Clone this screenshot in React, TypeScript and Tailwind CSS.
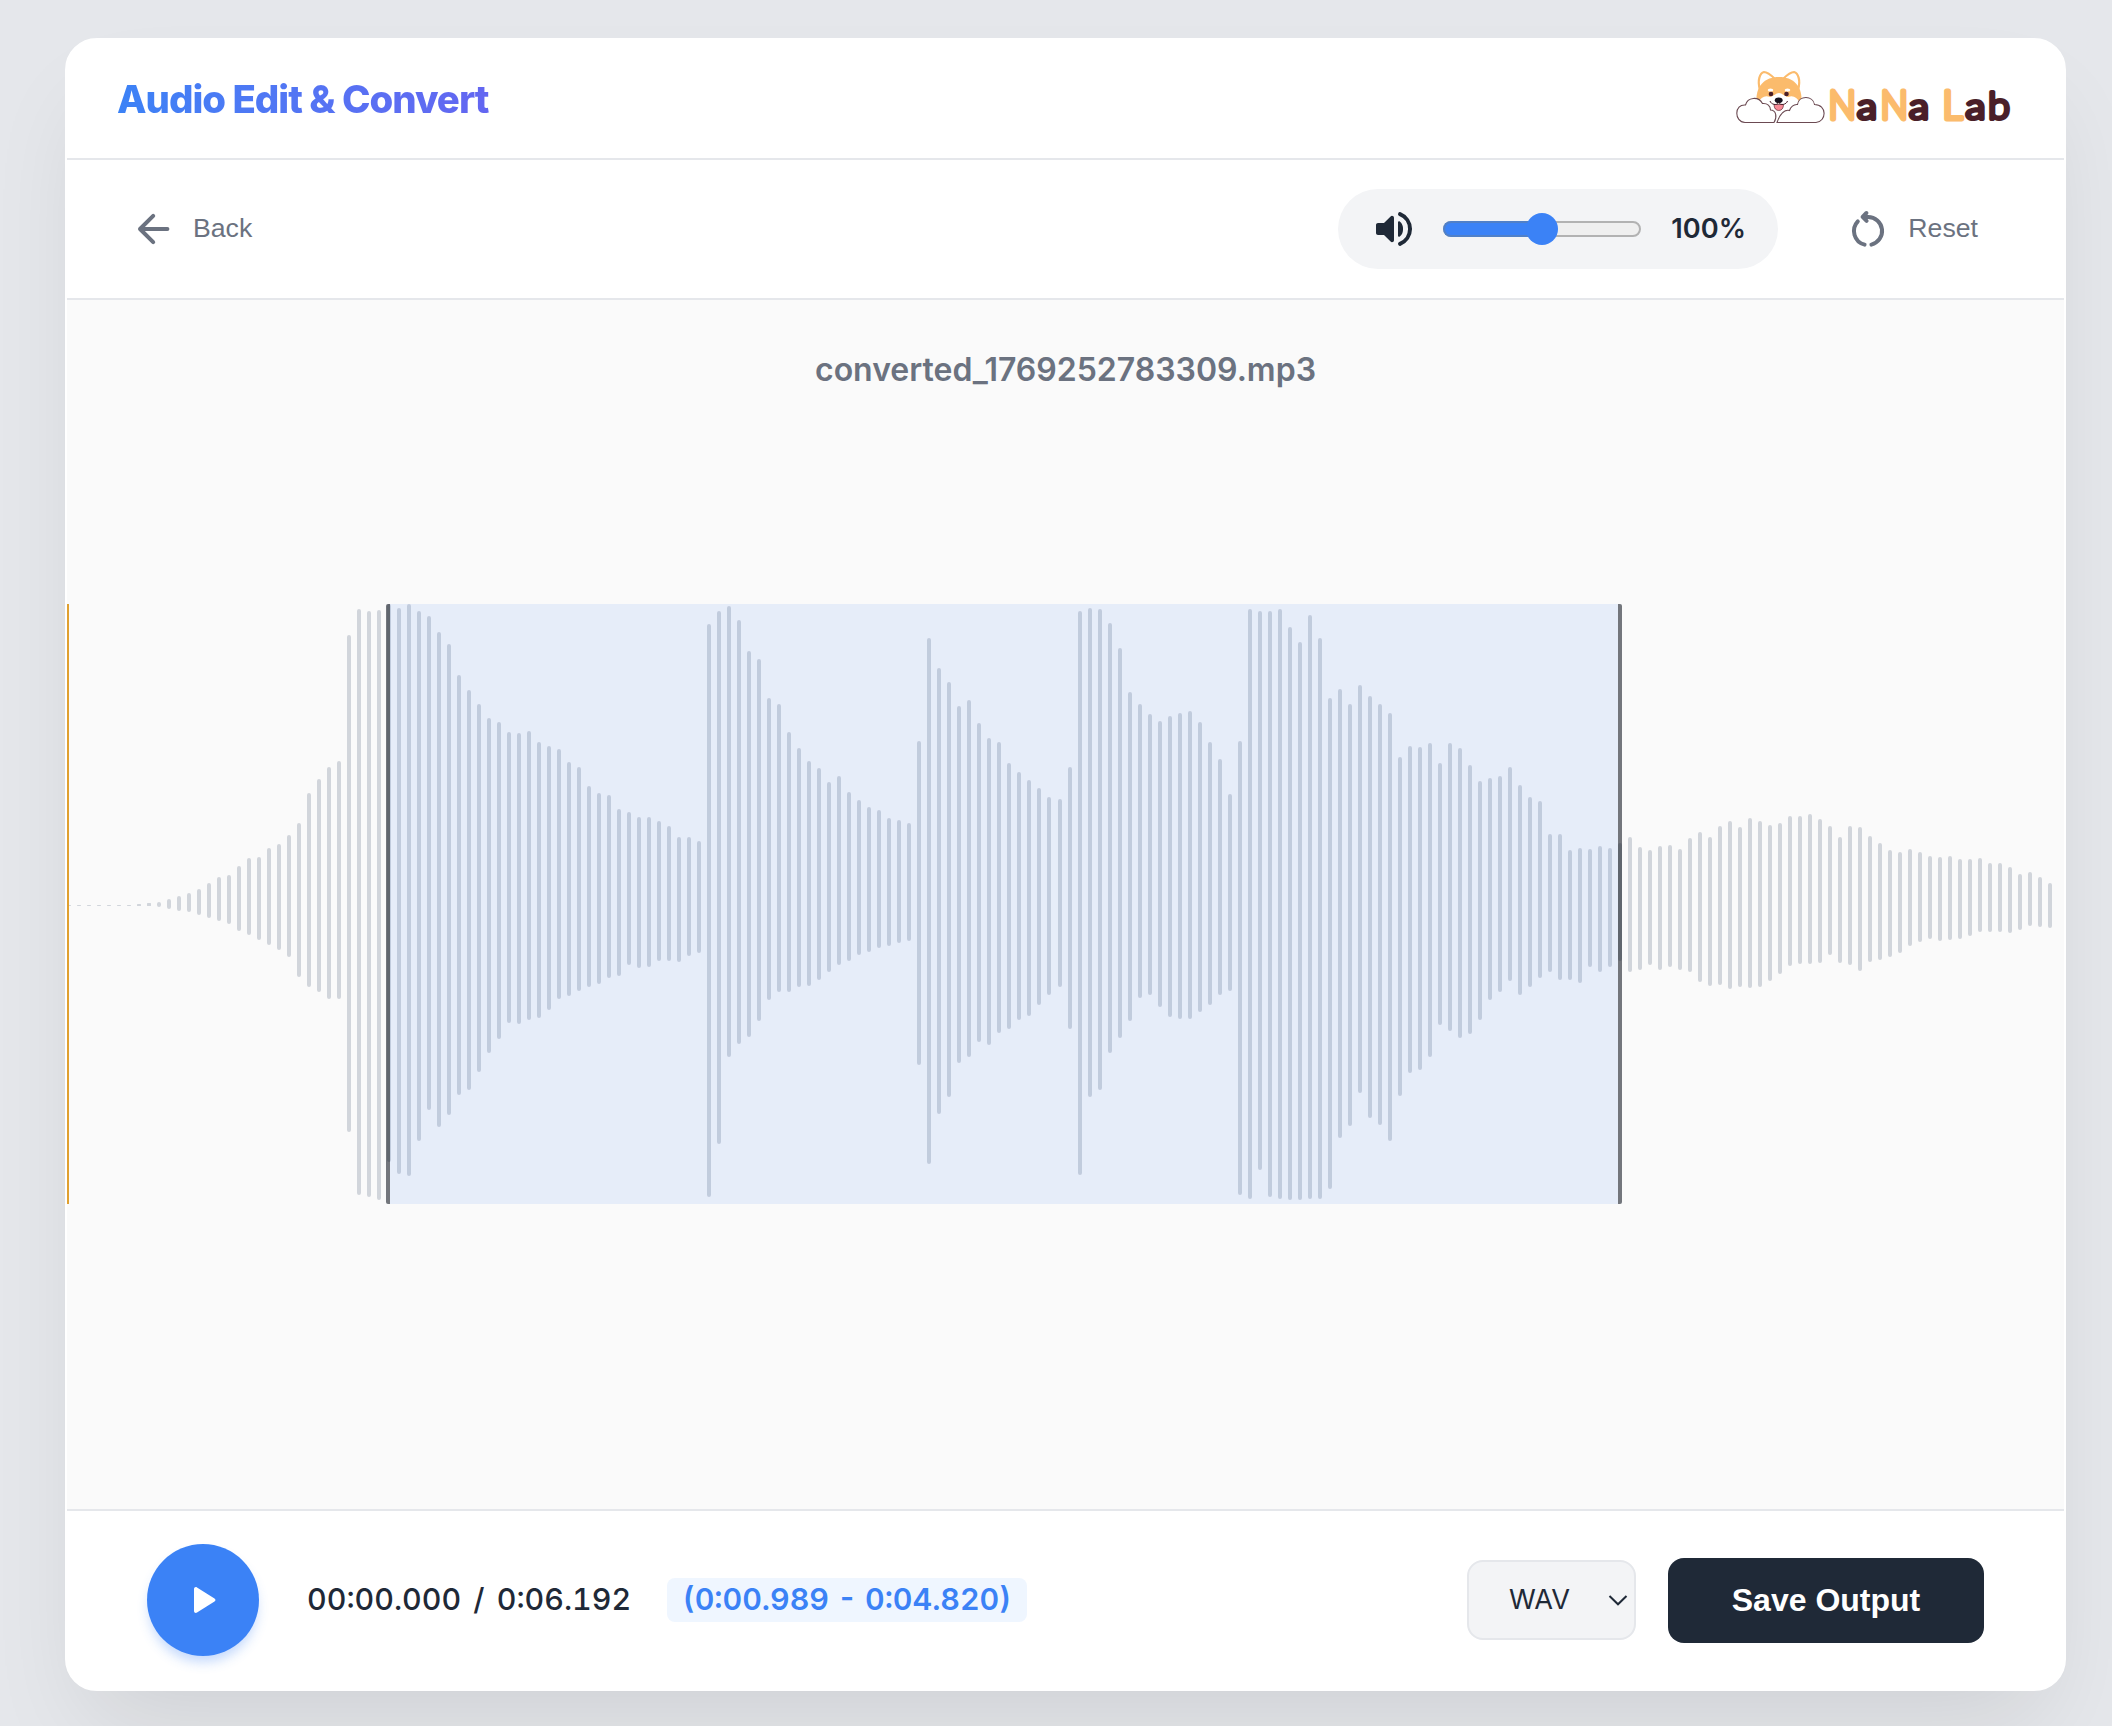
import React from "react";

const sans = "font-['Inter',sans-serif]";
const arial = "font-['Liberation_Sans',Arial,sans-serif]";

const WAVE_WIDTH = 1998;
const WAVE_HEIGHT = 600;
const DURATION = 6.192;
const region = { start: 0.989, end: 4.82 };

// [top, bottom] of every bar
const peaks: [number, number][] = [
  [301, 302], [301, 302], [301, 302], [301, 302], [301, 302], [301, 302], [301, 302], [300, 302], [299, 302], [298, 303],
  [295, 305], [292, 307], [289, 308], [285, 311], [279, 314], [273, 317], [271, 320], [262, 327], [254, 331], [253, 336],
  [244, 341], [240, 346], [231, 353], [219, 373], [189, 383], [175, 388], [163, 395], [157, 395], [31, 528], [5, 591],
  [7, 593], [6, 596], [0, 558], [4, 570], [0, 572], [7, 537], [12, 506], [28, 523], [40, 511], [71, 491],
  [86, 486], [100, 468], [114, 449], [118, 435], [128, 419], [129, 420], [127, 416], [138, 414], [142, 406], [145, 395],
  [158, 392], [163, 387], [182, 383], [189, 380], [191, 374], [205, 372], [208, 361], [213, 364], [213, 363], [217, 357],
  [222, 357], [233, 358], [233, 352], [237, 349], [20, 593], [7, 540], [2, 453], [16, 440], [47, 433], [55, 417],
  [94, 396], [100, 388], [128, 388], [144, 383], [157, 382], [164, 376], [178, 368], [172, 361], [188, 357], [196, 351],
  [203, 348], [206, 344], [214, 342], [216, 339], [219, 337], [137, 461], [34, 560], [64, 510], [78, 493], [102, 459],
  [96, 453], [119, 438], [134, 441], [138, 429], [159, 425], [168, 416], [176, 412], [184, 401], [193, 391], [195, 383],
  [163, 425], [7, 571], [4, 493], [5, 486], [19, 449], [44, 434], [88, 417], [100, 394], [110, 391], [117, 403],
  [112, 413], [109, 415], [107, 415], [118, 408], [138, 401], [155, 391], [190, 387], [137, 591], [5, 595], [7, 566],
  [7, 593], [5, 595], [23, 596], [38, 596], [11, 595], [34, 595], [94, 585], [85, 534], [100, 522], [81, 489],
  [92, 514], [100, 521], [109, 537], [153, 492], [142, 469], [143, 466], [139, 453], [159, 421], [139, 427], [144, 434],
  [161, 430], [177, 416], [174, 396], [172, 388], [163, 377], [181, 391], [193, 383], [197, 374], [230, 368], [230, 376],
  [246, 376], [244, 379], [245, 363], [242, 368], [244, 363], [239, 357], [233, 368], [243, 366], [246, 361], [242, 366],
  [241, 363], [245, 366], [234, 368], [228, 378], [233, 382], [222, 381], [217, 385], [223, 383], [214, 384], [217, 383],
  [221, 377], [219, 370], [212, 362], [212, 360], [210, 360], [215, 359], [222, 351], [233, 359], [222, 361], [223, 367],
  [232, 358], [239, 356], [246, 353], [248, 349], [245, 342], [248, 338], [252, 335], [253, 337], [252, 336], [255, 335],
  [255, 332], [254, 328], [259, 328], [259, 328], [263, 329], [270, 326], [268, 322], [273, 323], [279, 324],
];

const barX = (i: number) => i * 10 + (i > 98 ? 1 : 0);
const timeX = (t: number) => Math.round((t / DURATION) * WAVE_WIDTH);

function BackIcon() {
  return (
    <svg className="size-12" viewBox="0 0 24 24" fill="none" stroke="currentColor" strokeWidth="2" strokeLinecap="round" strokeLinejoin="round">
      <path d="M11.6 5.4 5 12l6.6 6.6M5 12h13.7" />
    </svg>
  );
}

function VolumeIcon() {
  return (
    <svg className="size-12" viewBox="0 0 24 24" fill="currentColor">
      <path d="M4 9h3l3.3-3.3c.63-.63 1.7-.18 1.7.71v11.18c0 .89-1.07 1.34-1.7.71L7 15H4c-.55 0-1-.45-1-1v-4c0-.55.45-1 1-1z" />
      <path d="M14 8.7c0-.5.5-.8.9-.5A4.6 4.6 0 0 1 16.5 12a4.6 4.6 0 0 1-1.6 3.8c-.4.3-.9 0-.9-.5z" />
      <path d="M15 4.58a8 8 0 0 1 0 14.84" fill="none" stroke="currentColor" strokeWidth="2" strokeLinecap="round" />
    </svg>
  );
}

function ResetIcon() {
  return (
    <svg className="size-12" viewBox="0 0 24 24" fill="none" stroke="currentColor" strokeWidth="2" strokeLinecap="round" strokeLinejoin="round">
      <path d="M6.9 8.2A7 7 0 0 0 10.3 19.8" />
      <path d="M9.8 6H12a7 7 0 0 1 1.7 13.8" />
      <path d="M11.2 4 9.3 5.9l2 2" />
    </svg>
  );
}

function Logo() {
  return (
    <svg className="mb-[7px] h-[60px] w-[280px]" viewBox="0 0 280 60">
      {/* ears */}
      <g fill="#fff" stroke="#fbbb6c" strokeWidth="2.2">
        <path d="M24 24C21 14 24 7 28 6c4 0 8 4 11 7" />
        <path d="M62 24c3-10 0-17-4-18-4 0-8 4-11 7" />
      </g>
      {/* head */}
      <path d="M20.5 33c0-13 8-22 22.500-22S65.500 20 65.500 33l-5 4H25z" fill="#fbbb6c" />
      <path d="M22 37c3-6 7-8 12-6 4-1 6-4 9-4s5 3 9 4c5-2 9 0 12 6l-8 10H30z" fill="#fff" />
      <ellipse cx="34.500" cy="24" rx="2.800" ry="1.600" fill="#fff" />
      <ellipse cx="51.500" cy="24" rx="2.800" ry="1.600" fill="#fff" />
      <circle cx="35" cy="28" r="2.300" fill="#4a1f29" />
      <circle cx="50.500" cy="28" r="2.300" fill="#4a1f29" />
      <ellipse cx="42.700" cy="34.300" rx="3.900" ry="2.800" fill="#17131f" />
      <path d="M38 38.500h9.500c0 4-2 6-4.700 6s-4.800-2-4.800-6z" fill="#f88a97" stroke="#4a1f29" strokeWidth=".6" />
      <path d="M34 35c1 3.500 7 5 8.700 1.500C44.500 40 50.500 38.500 51.500 35" fill="none" stroke="#4a1f29" strokeWidth="1" />
      {/* clouds */}
      <g fill="#fff" stroke="#6b4a52" strokeWidth="1.1">
        <path d="M9 56.500C-2 56-2 38 9.500 39c2-8 13-9 17-1.500 5-.5 8 2.500 8 6.500 5.500 0 7 7 3.500 12.500z" />
        <path d="M80 56.500c11-1 11-18-1.500-18C77 29.500 63 29 61.500 38.500c-4-.5-7 3-8 6C47 43 43 51 41 56.500z" />
      </g>
      <g fontFamily="Lato, sans-serif" fontWeight="300" fontSize="39" strokeWidth="4.800" strokeLinejoin="round" strokeLinecap="round">
        <g fill="#fbbb6c" stroke="#fbbb6c">
          <text x="92.500" y="52.500" textLength="27.500" lengthAdjust="spacingAndGlyphs">N</text>
          <text x="144.500" y="52.500" textLength="27.500" lengthAdjust="spacingAndGlyphs">N</text>
          <text x="206.500" y="52.500" textLength="20" lengthAdjust="spacingAndGlyphs">L</text>
        </g>
        <g fill="#4a1f29" stroke="#4a1f29" fontSize="35" strokeWidth="4">
          <text x="121" y="52.500" textLength="20" lengthAdjust="spacingAndGlyphs">a</text>
          <text x="173" y="52.500" textLength="20" lengthAdjust="spacingAndGlyphs">a</text>
          <text x="229.500" y="52.500" textLength="20" lengthAdjust="spacingAndGlyphs">a</text>
          <text x="252" y="52.500" fontSize="38" textLength="22" lengthAdjust="spacingAndGlyphs">b</text>
        </g>
      </g>
    </svg>
  );
}

function Waveform() {
  const left = timeX(region.start);
  const right = timeX(region.end);
  return (
    <svg className="block h-[600px] w-[1998px] shrink-0" viewBox={`0 0 ${WAVE_WIDTH} ${WAVE_HEIGHT}`}>
      {peaks.map(([top, bottom], i) => (
        <rect key={i} x={barX(i)} y={top} width="4" height={bottom - top} rx={bottom - top > 3 ? 2 : 0.5} fill="#d1d5db" />
      ))}
      <rect x={left} y="0" width={right - left} height={WAVE_HEIGHT} rx="2" fill="#3b82f6" fillOpacity="0.1" />
      <path d={`M${left + 4} 0h-2a2 2 0 0 0-2 2v596a2 2 0 0 0 2 2h2z`} fill="#000" fillOpacity="0.5" />
      <path d={`M${right - 4} 0h2a2 2 0 0 1 2 2v596a2 2 0 0 1-2 2h-2z`} fill="#000" fillOpacity="0.5" />
      <rect x="0" y="0" width="2" height={WAVE_HEIGHT} fill="#e0a030" />
    </svg>
  );
}

function VolumeSlider({ value }: { value: number }) {
  return (
    <div className="relative h-4 w-[198px] overflow-visible rounded-full border-2 border-[#b2b2b2] bg-[#efefef]">
      <div
        className="absolute -top-0.5 -left-0.5 h-4 rounded-l-full border-2 border-r-0 border-[#5080c8] bg-[#3b82f6]"
        style={{ width: `${value}%` }}
      />
      <div className="absolute -top-[10px] size-8 -translate-x-1/2 rounded-full bg-[#3b82f6]" style={{ left: `${value}%` }} />
    </div>
  );
}

export default function App() {
  return (
    <div className={`${sans} h-[1726px] w-[2112px] overflow-hidden bg-[#e5e7eb] pt-[38px] pl-[65px] text-[#1f2937]`}>
      <div className="flex h-[1653px] w-[2001px] flex-col overflow-hidden rounded-[32px] border-2 border-white bg-white shadow-[0_50px_100px_-24px_rgba(0,0,0,0.1)]">
        <header className="flex h-[120px] items-center justify-between border-b-2 border-[#e5e7eb] pr-12 pl-[50px]">
          <h1 className="bg-linear-to-r from-[#3b82f6] to-[#6366f1] bg-clip-text pt-0.5 text-[38.4px] font-extrabold tracking-[-1px] text-transparent">
            Audio Edit &amp; Convert
          </h1>
          <Logo />
        </header>

        <div className="flex h-[140px] items-center justify-between border-b-2 border-[#e5e7eb] pr-[86px] pl-[63px]">
          <button className={`${arial} flex items-center gap-[15px] text-[26.67px] text-[#6b7280]`}>
            <BackIcon />
            <span className="pb-0.5">Back</span>
          </button>
          <div className="flex items-center gap-[66px]">
            <div className="flex h-20 w-[440px] items-center rounded-full bg-[#f3f4f6] pl-8">
              <VolumeIcon />
              <div className="ml-[25px]">
                <VolumeSlider value={50} />
              </div>
              <span className="ml-[30px] text-[27.2px] font-semibold">100%</span>
            </div>
            <button className={`${arial} flex items-center gap-4 text-[26.67px] text-[#6b7280]`}>
              <ResetIcon />
              <span className="pb-0.5">Reset</span>
            </button>
          </div>
        </div>

        <main className="flex flex-1 flex-col bg-[#fafafa]">
          <div className="h-[304px] pt-[46px] text-center text-[32px] leading-[48px] font-semibold text-[#6b7280]">
            converted_1769252783309.mp3
          </div>
          <Waveform />
        </main>

        <footer className="flex h-[180px] items-center justify-between border-t-2 border-[#e5e7eb] pr-20 pl-20">
          <div className="flex items-center">
            <button className="flex size-28 items-center justify-center rounded-full bg-[#3b82f6] shadow-[0_8px_12px_-2px_rgba(59,130,246,0.3)]">
              <svg className="ml-1 h-[26px] w-[22px]" viewBox="0 0 22 26" fill="#fff">
                <path d="M0 2C0 .3 1.700-.5 3 .4l17.500 11c1.300.8 1.300 2.400 0 3.200L3 25.600C1.700 26.500 0 25.700 0 24z" />
              </svg>
            </button>
            <span className="ml-12 w-[324px] text-[30.4px] font-medium [word-spacing:4px] whitespace-nowrap tabular-nums">00:00.000 / 0:06.192</span>
            <span className="ml-[36px] flex h-11 w-[360px] items-center justify-center rounded-lg bg-[#eff6ff] text-[30.4px] font-semibold whitespace-nowrap text-[#3b82f6] tabular-nums">
              (0:00.989 - 0:04.820)
            </span>
          </div>
          <div className="flex items-center gap-8">
            <div className="flex h-20 w-[169px] items-center justify-between rounded-2xl border-2 border-[#e5e7eb] bg-[#f3f4f6] pr-1.5 pl-10 text-[27.2px]">
              <span>WAV</span>
              <svg className="h-[11px] w-5" viewBox="0 0 20 11" fill="none" stroke="#1f2937" strokeWidth="2">
                <path d="m1.500 1 8.500 8.300L18.500 1" />
              </svg>
            </div>
            <button className={`${arial} h-[85px] w-[316px] rounded-2xl bg-[#1f2937] text-[32px] font-bold text-white`}>
              Save Output
            </button>
          </div>
        </footer>
      </div>
    </div>
  );
}
